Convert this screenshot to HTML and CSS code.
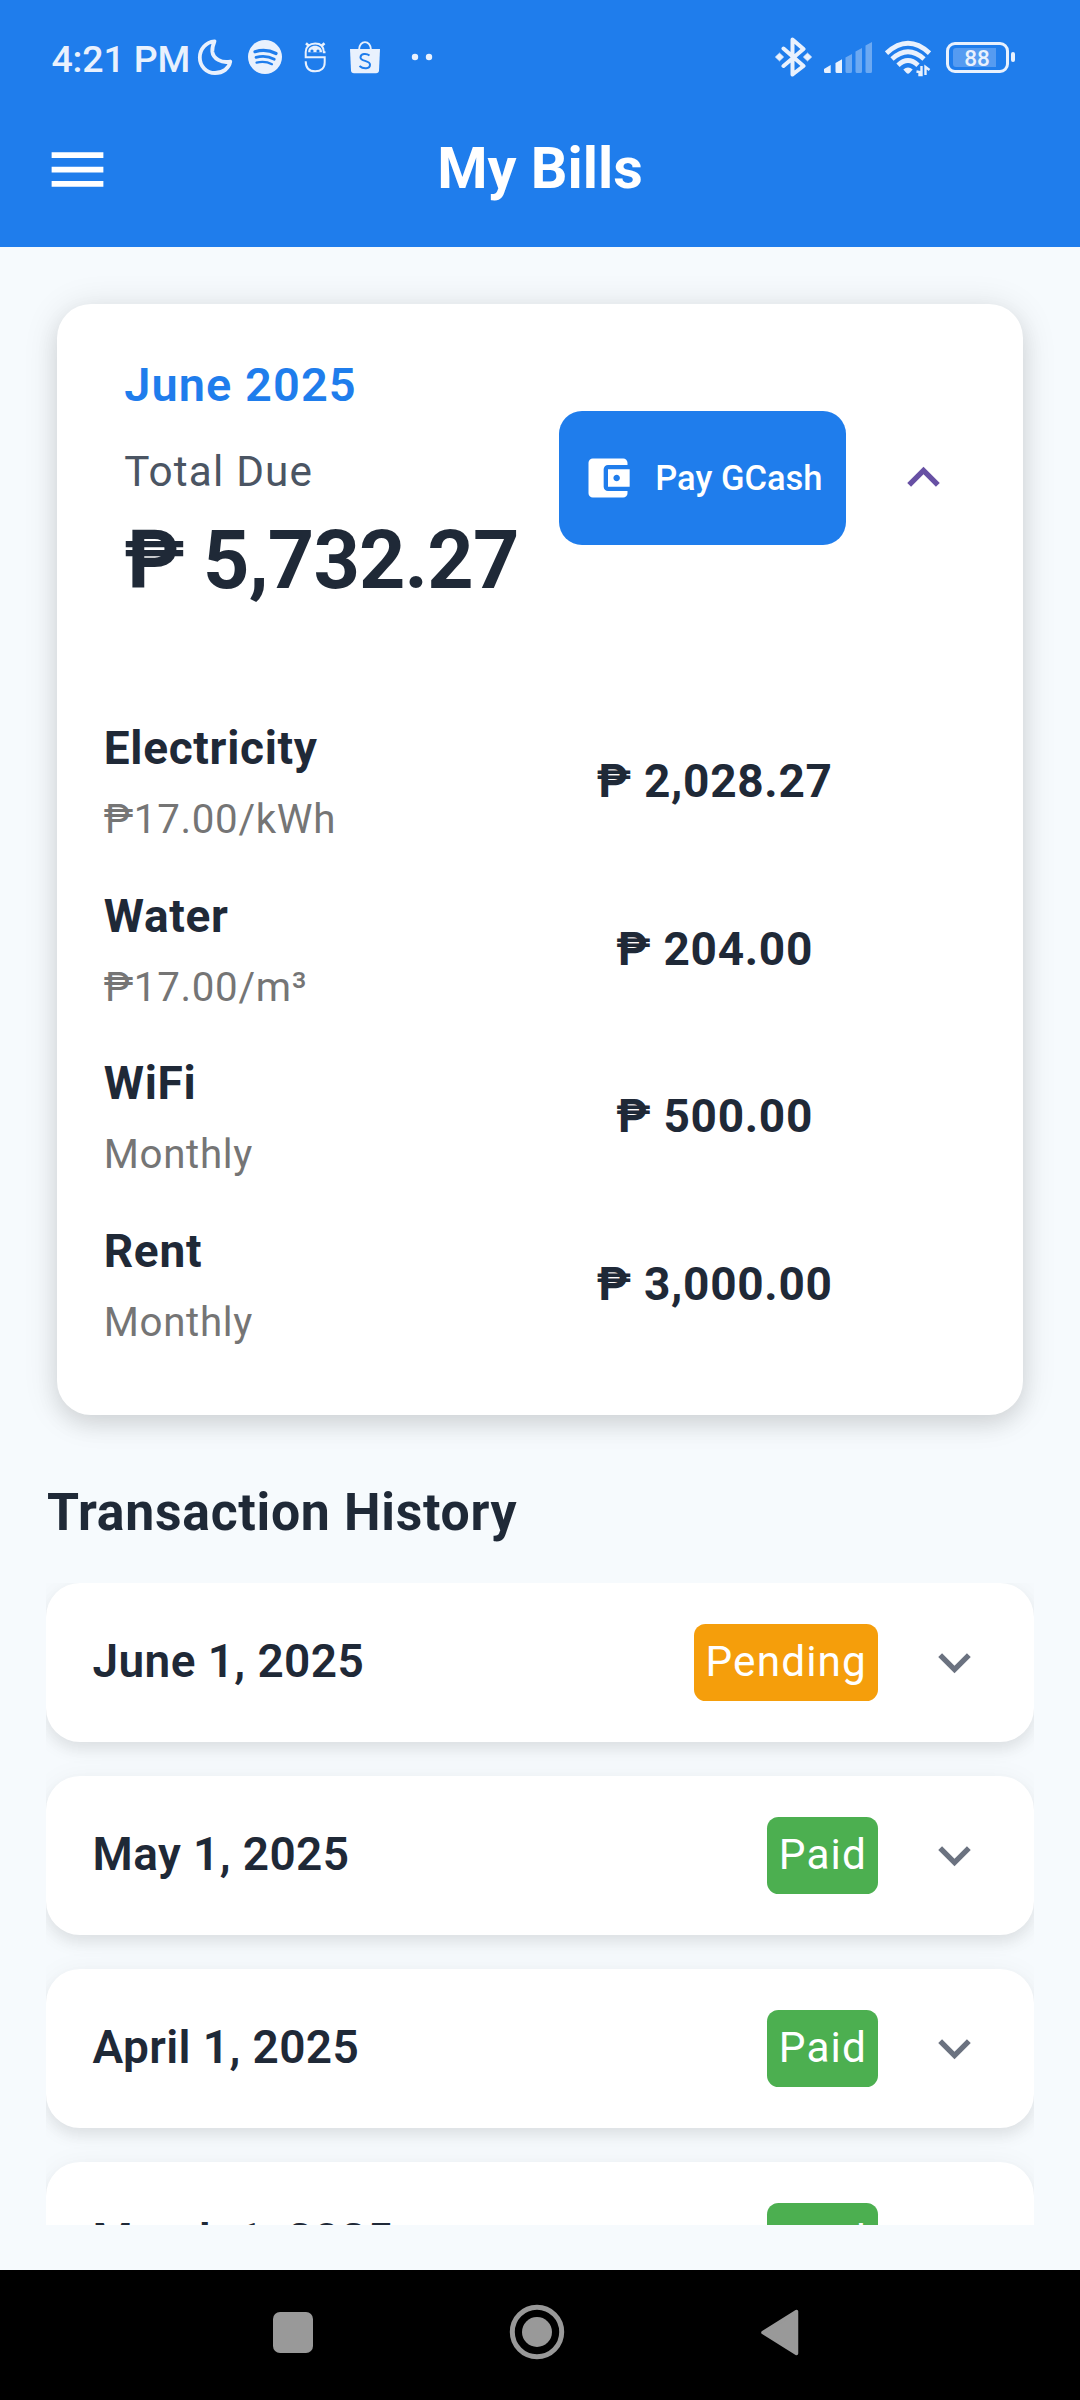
FILE: index.html
```html
<!DOCTYPE html>
<html lang="en">
<head>
<meta charset="utf-8">
<title>My Bills</title>
<link rel="stylesheet" href="styles.css">
</head>
<body>
<header class="top">
  <div class="status">
    <span class="time">4:21 PM</span>
    <svg class="moon" width="36" height="40" viewBox="197 37 36 40"><path d="M214.500 41.300C206 42 199.800 49 199.800 57.500C199.800 66.300 206.500 73 215 73C223 73 229 68.500 230.300 61.500C221.500 63.500 213 58.500 212.300 51.500C212 47.500 213 45 214.500 41.300Z" fill="none" stroke="#e9f1fd" stroke-width="3.800" stroke-linejoin="round"/></svg>
    <svg class="music" width="34" height="40" viewBox="248 37 34 40"><circle cx="265" cy="57" r="17" fill="#e9f1fd"/><g fill="none" stroke="#1f7dec" stroke-linecap="round"><path d="M255 51.700Q266 48.300 276 53.500" stroke-width="3.200"/><path d="M256 57.400Q266 54.800 274.300 59.300" stroke-width="2.700"/><path d="M256.500 62.600Q265 60.500 272 64.200" stroke-width="2.200"/></g></svg>
    <svg class="bot" width="22" height="40" viewBox="304 37 22 40"><g fill="none" stroke="#e9f1fd" stroke-width="2"><path d="M325.500 52.300H323.800C323.800 46.500 320.500 43.400 315.200 43.400C309.500 43.400 305.700 47 305.700 52V57.200H324.700V62.500C324.700 68 321 71.300 315.200 71.300C309.500 71.300 305.700 68 305.700 61.200"/><path d="M306 43.300L309.300 46.200M324.500 43.300L321.200 46.200" stroke-width="2.600"/></g><path d="M308.200 52.300C307.500 43.500 322.500 43.500 322 52.300Z" fill="#e9f1fd"/><g fill="#1f7dec"><circle cx="312" cy="51" r="1.600"/><circle cx="318" cy="51" r="1.600"/></g></svg>
    <svg class="bag" width="30" height="40" viewBox="350 37 30 40"><path d="M350 49H380L379 70.500Q378.800 73.300 376 73.300H354Q351.200 73.300 351 70.500Z" fill="#e9f1fd"/><path d="M359 50C359 39.500 371 39.500 371 50" fill="none" stroke="#e9f1fd" stroke-width="1.900"/><path d="M369.500 55.500C366.500 53 360.500 53.300 360.500 57.400C360.500 61.800 370 60 370 64.700C370 69 363.500 69.500 359.500 66" fill="none" stroke="#1f7dec" stroke-width="2"/></svg>
    <svg class="dots" width="22" height="40" viewBox="411 37 22 40" fill="#e9f1fd"><circle cx="415" cy="57" r="3.200"/><circle cx="429" cy="57" r="3.200"/></svg>
    <svg class="bluetooth" width="37" height="40" viewBox="774.500 37 37 40"><path d="M783 48.500L803 66L792 74.500V39.500L803 49L783 66" fill="none" stroke="#e9f1fd" stroke-width="4" stroke-linejoin="round" stroke-linecap="round"/><path d="M775 57L779 53.200L783 57L779 60.800ZM803 57L807 53.200L811 57L807 60.800Z" fill="#e9f1fd" stroke="#e9f1fd" stroke-linejoin="round"/></svg>
    <svg class="signal" width="48" height="40" viewBox="824 37 48 40" fill="#e9f1fd"><path d="M824 69L830.700 65V73H825.500Q824 73 824 71.500ZM835.500 63L842 59.300V73H837Q835.500 73 835.500 71.500Z"/><path d="M845.500 57.500L852 54V71.500Q852 73 850.500 73H847Q845.500 73 845.500 71.500ZM855.500 51.500L862 48V71.500Q862 73 860.500 73H857Q855.500 73 855.500 71.500ZM865.500 45.500L872 42V71.500Q872 73 870.500 73H867Q865.500 73 865.500 71.500Z" opacity=".38"/></svg>
    <svg class="wifi" width="46" height="40" viewBox="885 37 46 40"><g fill="none" stroke="#e9f1fd" stroke-width="4.800"><path d="M886.500 53.200Q908 33.500 929.500 53.200"/><path d="M892 59Q908 44.500 924 59"/><path d="M898 65.200Q908 56 918 65.200"/></g><path d="M903.300 69.500Q908 65.500 912.700 69.500L909.500 73Q908 74.500 906.500 73Z" fill="#e9f1fd"/><path d="M921.500 66V75H919.500V72L916.500 71.500M925.500 75V67L929.500 70" fill="none" stroke="#e9f1fd" stroke-width="2.400"/></svg>
    <div class="battery"><span class="level">88</span></div>
  </div>
  <div class="appbar">
    <svg class="menu" width="69" height="69" viewBox="0 0 24 24" fill="#fff"><path d="M3 18h18v-2H3v2zm0-5h18v-2H3v2zm0-7v2h18V6H3z"/></svg>
    <h1 class="title">My Bills</h1>
  </div>
</header>

<main class="content">
  <section class="bill">
    <div class="bill-head">
      <div class="due">
        <div class="month">June 2025</div>
        <div class="due-label">Total Due</div>
        <div class="due-amount">₱ 5,732.27</div>
      </div>
      <div class="pay"><svg width="52" height="52" viewBox="0 0 24 24" fill="#fff"><path d="M21 18v1c0 1.100-.9 2-2 2H5c-1.110 0-2-.9-2-2V5c0-1.100.89-2 2-2h14c1.100 0 2 .9 2 2v1h-9c-1.110 0-2 .9-2 2v8c0 1.100.89 2 2 2h9zm-9-2h10V8H12v8zm4-2.500c-.83 0-1.500-.67-1.500-1.500s.67-1.500 1.500-1.500 1.500.67 1.500 1.500-.67 1.500-1.500 1.500z"/></svg><span>Pay GCash</span></div>
      <svg class="collapse" width="65" height="65" viewBox="0 0 24 24" fill="#6750a4"><path d="M12 8l-6 6 1.410 1.410L12 10.830l4.590 4.580L18 14z"/></svg>
    </div>
    <div class="items">
      <div class="item"><div><div class="name">Electricity</div><div class="rate">₱17.00/kWh</div></div><div class="amount">₱ 2,028.27</div></div>
      <div class="item"><div><div class="name">Water</div><div class="rate">₱17.00/m³</div></div><div class="amount">₱ 204.00</div></div>
      <div class="item"><div><div class="name">WiFi</div><div class="rate">Monthly</div></div><div class="amount">₱ 500.00</div></div>
      <div class="item"><div><div class="name">Rent</div><div class="rate">Monthly</div></div><div class="amount">₱ 3,000.00</div></div>
    </div>
  </section>

  <h2 class="section-title">Transaction History</h2>
  <div class="history">
    <div class="entry"><span class="date">June 1, 2025</span><span class="badge pending">Pending</span><svg width="65" height="65" viewBox="0 0 24 24" fill="#6b7280"><path d="M16.590 8.590L12 13.170 7.410 8.590 6 10l6 6 6-6z"/></svg></div>
    <div class="entry"><span class="date">May 1, 2025</span><span class="badge">Paid</span><svg width="65" height="65" viewBox="0 0 24 24" fill="#6b7280"><path d="M16.590 8.590L12 13.170 7.410 8.590 6 10l6 6 6-6z"/></svg></div>
    <div class="entry"><span class="date">April 1, 2025</span><span class="badge">Paid</span><svg width="65" height="65" viewBox="0 0 24 24" fill="#6b7280"><path d="M16.590 8.590L12 13.170 7.410 8.590 6 10l6 6 6-6z"/></svg></div>
    <div class="entry"><span class="date">March 1, 2025</span><span class="badge">Paid</span><svg width="65" height="65" viewBox="0 0 24 24" fill="#6b7280"><path d="M16.590 8.590L12 13.170 7.410 8.590 6 10l6 6 6-6z"/></svg></div>
  </div>
</main>

<nav class="navbar">
  <svg class="recent" width="40" height="41" viewBox="0 0 40 41"><rect width="40" height="41" rx="7" fill="#999"/></svg>
  <svg class="home" width="56" height="56" viewBox="0 0 56 56"><circle cx="28" cy="28" r="24.700" fill="none" stroke="#999" stroke-width="5"/><circle cx="28" cy="28" r="15" fill="#999"/></svg>
  <svg class="back" width="38" height="47" viewBox="0 0 38 47"><path d="M2 23.500L35.500 2.500V44.500Z" fill="#999" stroke="#999" stroke-width="3.500" stroke-linejoin="round"/></svg>
</nav>
</body>
</html>
```
FILE: styles.css
```css
* { box-sizing: border-box; }

body {
  margin: 0;
  width: 1080px;
  height: 2400px;
  overflow: hidden;
  display: flex;
  flex-direction: column;
  background: #f6fafd;
  color: #1f2937;
  font-family: Roboto, "Liberation Sans", sans-serif;
}

svg { display: block; flex: none; }

/* Header */
.top { height: 247px; background: #1f7dec; color: #fff; flex: none; }
.status { height: 114px; display: flex; align-items: center; padding: 0 65px 0 51.500px; }
.time { font-size: 37.500px; font-weight: 500; line-height: 44px; letter-spacing: -.2px; width: 145.500px; color: #e9f1fd; white-space: nowrap; padding-top: 3.500px; }
.music { margin-left: 15px; }
.bot { margin-left: 22px; }
.bag { margin-left: 24px; }
.dots { margin-left: 31px; }
.bluetooth { margin-left: auto; }
.signal { margin-left: 12.500px; }
.wifi { margin-left: 13px; }
.battery {
  position: relative;
  margin-left: 15px;
  width: 63px;
  height: 31px;
  margin-right: 6px;
  border: 3px solid #e9f1fd;
  border-radius: 9px;
  padding: 3px 8px 3px 4px;
}
.battery::after {
  content: "";
  position: absolute;
  right: -9px;
  top: 7.500px;
  width: 4px;
  height: 10px;
  border-radius: 2px;
  background: #e9f1fd;
}
.level {
  display: block;
  width: 43px;
  height: 19px;
  border-radius: 3px 0 0 3px;
  background: #559bf1;
  color: #e9f1fd;
  font-size: 22.500px;
  font-weight: 500;
  line-height: 21px;
  padding-left: 5px;
  text-align: center;
}
.appbar {
  height: 109px;
  display: grid;
  grid-template-columns: 69px 1fr 69px;
  align-items: center;
  padding: 0 42.500px;
}
.menu { margin-top: 2px; }
.title { margin: 0; font-size: 57.500px; font-weight: 700; line-height: 68px; text-align: center; }

/* Current bill */
.content { flex: 1; padding: 57px 46px 45px; min-height: 0; }
.bill {
  height: 1110.700px;
  margin: 0 11.200px;
  padding: 53.800px 67px 0 46.500px;
  background: #fff;
  border-radius: 34px;
  box-shadow: 0 10px 22px rgba(0, 0, 0, .09), 0 3px 36px rgba(0, 0, 0, .11);
}
.bill-head { display: flex; align-items: flex-start; height: 363.500px; padding-left: 20.500px; }
.due { width: 435.300px; white-space: nowrap; }
.month { font-size: 47px; font-weight: 600; line-height: 54px; letter-spacing: 1.050px; color: #1f7dec; }
.due-label { margin-top: 35.700px; font-size: 42.300px; line-height: 50px; letter-spacing: 1.170px; color: #4b5563; }
.due-amount { margin-top: 16.200px; font-size: 81px; font-weight: 700; line-height: 94px; letter-spacing: -.850px; }
.pay {
  display: flex;
  align-items: center;
  width: 288px;
  height: 134.500px;
  margin-top: 52.800px;
  padding-left: 23px;
  gap: 21.500px;
  border-radius: 23px;
  background: #1f7dec;
  color: #fff;
  font-size: 34.500px;
  font-weight: 500;
  white-space: nowrap;
}
.collapse { margin: 87.500px 0 0 44.500px; }
.items { display: flex; flex-direction: column; gap: 44.600px; }
.item { display: grid; grid-template-columns: 456.500px 308px; align-items: center; }
.name, .amount { font-size: 46px; font-weight: 700; line-height: 54px; letter-spacing: .7px; }
.amount { text-align: center; padding: 0 0 3.500px 1px; }
.rate { margin-top: 21px; font-size: 40.250px; line-height: 48px; letter-spacing: .7px; color: #757575; }

/* History */
.section-title { margin: 68.600px 0 39.300px 1px; font-size: 51.750px; font-weight: 700; line-height: 60px; letter-spacing: .7px; }
.history { display: flex; flex-direction: column; gap: 34px; height: 642.300px; overflow: hidden; }
.entry {
  display: flex;
  align-items: center;
  flex: none;
  height: 159px;
  padding: 0 47px 0 46.500px;
  background: #fff;
  border-radius: 34px;
  box-shadow: 0 8px 14px rgba(0, 0, 0, .07), 0 3px 28px rgba(0, 0, 0, .05);
}
.date { flex: 1; font-size: 46px; font-weight: 600; letter-spacing: .4px; padding-bottom: 2px; }
.badge {
  height: 77px;
  margin-right: 44px;
  padding: 0 11px 0 11.500px;
  border-radius: 11.500px;
  background: #4caf50;
  color: #fff;
  font-size: 42.300px;
  line-height: 76.500px;
  letter-spacing: 1.150px;
}
.badge.pending { background: #f59e0b; }

/* System navigation */
.navbar { height: 130px; flex: none; display: flex; align-items: center; padding: 0 0 6px 273px; background: #000; }
.home { margin-left: 195.500px; }
.back { margin-left: 196.500px; }
```
